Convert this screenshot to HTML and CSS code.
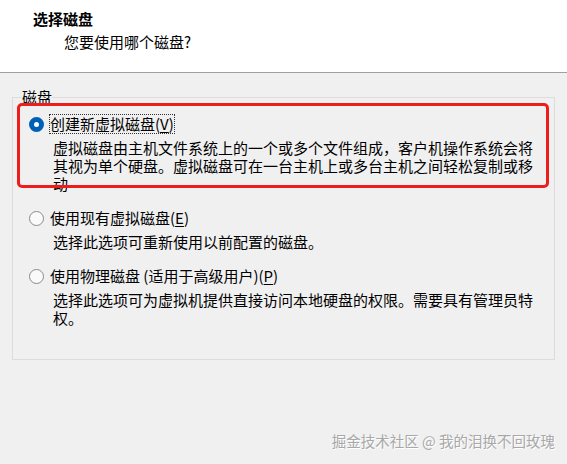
FILE: index.html
```html
<!DOCTYPE html>
<html lang="zh-CN">
<head>
    <meta charset="UTF-8">
    <title>选择磁盘</title>
    <link rel="stylesheet" href="styles.css">
</head>
<body>

<div class="header">
    <div class="title">选择磁盘</div>
    <div class="subtitle">您要使用哪个磁盘?</div>
</div>

<div class="content">
    <fieldset class="group">
        <legend>磁盘</legend>

        <div class="option highlighted">
            <div class="option-row">
                <span class="radio checked"></span>
                <span class="option-label focused">创建新虚拟磁盘(<u>V</u>)</span>
            </div>
            <p class="desc">虚拟磁盘由主机文件系统上的一个或多个文件组成，客户机操作系统会将其视为单个硬盘。虚拟磁盘可在一台主机上或多台主机之间轻松复制或移动</p>
            <span class="mark"></span>
        </div>

        <div class="option">
            <div class="option-row">
                <span class="radio"></span>
                <span class="option-label">使用现有虚拟磁盘(<u>E</u>)</span>
            </div>
            <p class="desc">选择此选项可重新使用以前配置的磁盘。</p>
        </div>

        <div class="option">
            <div class="option-row">
                <span class="radio"></span>
                <span class="option-label">使用物理磁盘 (适用于高级用户)(<u>P</u>)</span>
            </div>
            <p class="desc">选择此选项可为虚拟机提供直接访问本地硬盘的权限。需要具有管理员特权。</p>
        </div>
    </fieldset>

    <div class="watermark">掘金技术社区 @ 我的泪换不回玫瑰</div>
</div>

</body>
</html>
```

FILE: styles.css
```css
body {
    margin: 0;
    font-family: "Noto Sans CJK SC", "Noto Sans", sans-serif;
    font-size: 15px;
    line-height: 18px;
    color: #000;
    background: #f0f0f0;
}
.header {
    height: 73px;
    box-sizing: border-box;
    padding-top: 10px;
    background: #fff;
    border-bottom: 1px solid #a0a0a0;
}
.title {
    font-weight: bold;
    padding-left: 33px;
}
.subtitle {
    padding-left: 64px;
    margin-top: 5px;
}
.content {
    padding: 0 12px;
}
.group {
    margin: 15px 0 0;
    padding: 9px 0 32px;
    border: 1px solid #dcdcdc;
    display: flex;
    flex-direction: column;
    gap: 16px;
}
.group legend {
    margin-left: 9px;
    padding: 0;
}
.option {
    position: relative;
    padding-left: 16px;
}
.option-row {
    display: flex;
    align-items: center;
    gap: 6px;
}
.radio {
    width: 15px;
    height: 15px;
    border-radius: 50%;
    box-sizing: border-box;
    border: 1.5px solid #8a8a8a;
    background: #fafafa;
}
.radio.checked {
    border: 5px solid #005fb8;
    background: #fff;
}
.option-label u {
    text-underline-offset: 2px;
}
.focused {
    outline: 1px dotted #333;
}
.desc {
    margin: 6px 0 0 24px;
    max-width: 484px;
}
.mark {
    position: absolute;
    left: 4px;
    right: 5px;
    top: -12px;
    bottom: 5px;
    border: 3px solid #ee1d1d;
    border-radius: 5px;
}
.watermark {
    margin-top: 72px;
    text-align: right;
    font-size: 14.5px;
    color: #a8a8a8;
    text-shadow: 1px 1px 0 #fff;
}
```
